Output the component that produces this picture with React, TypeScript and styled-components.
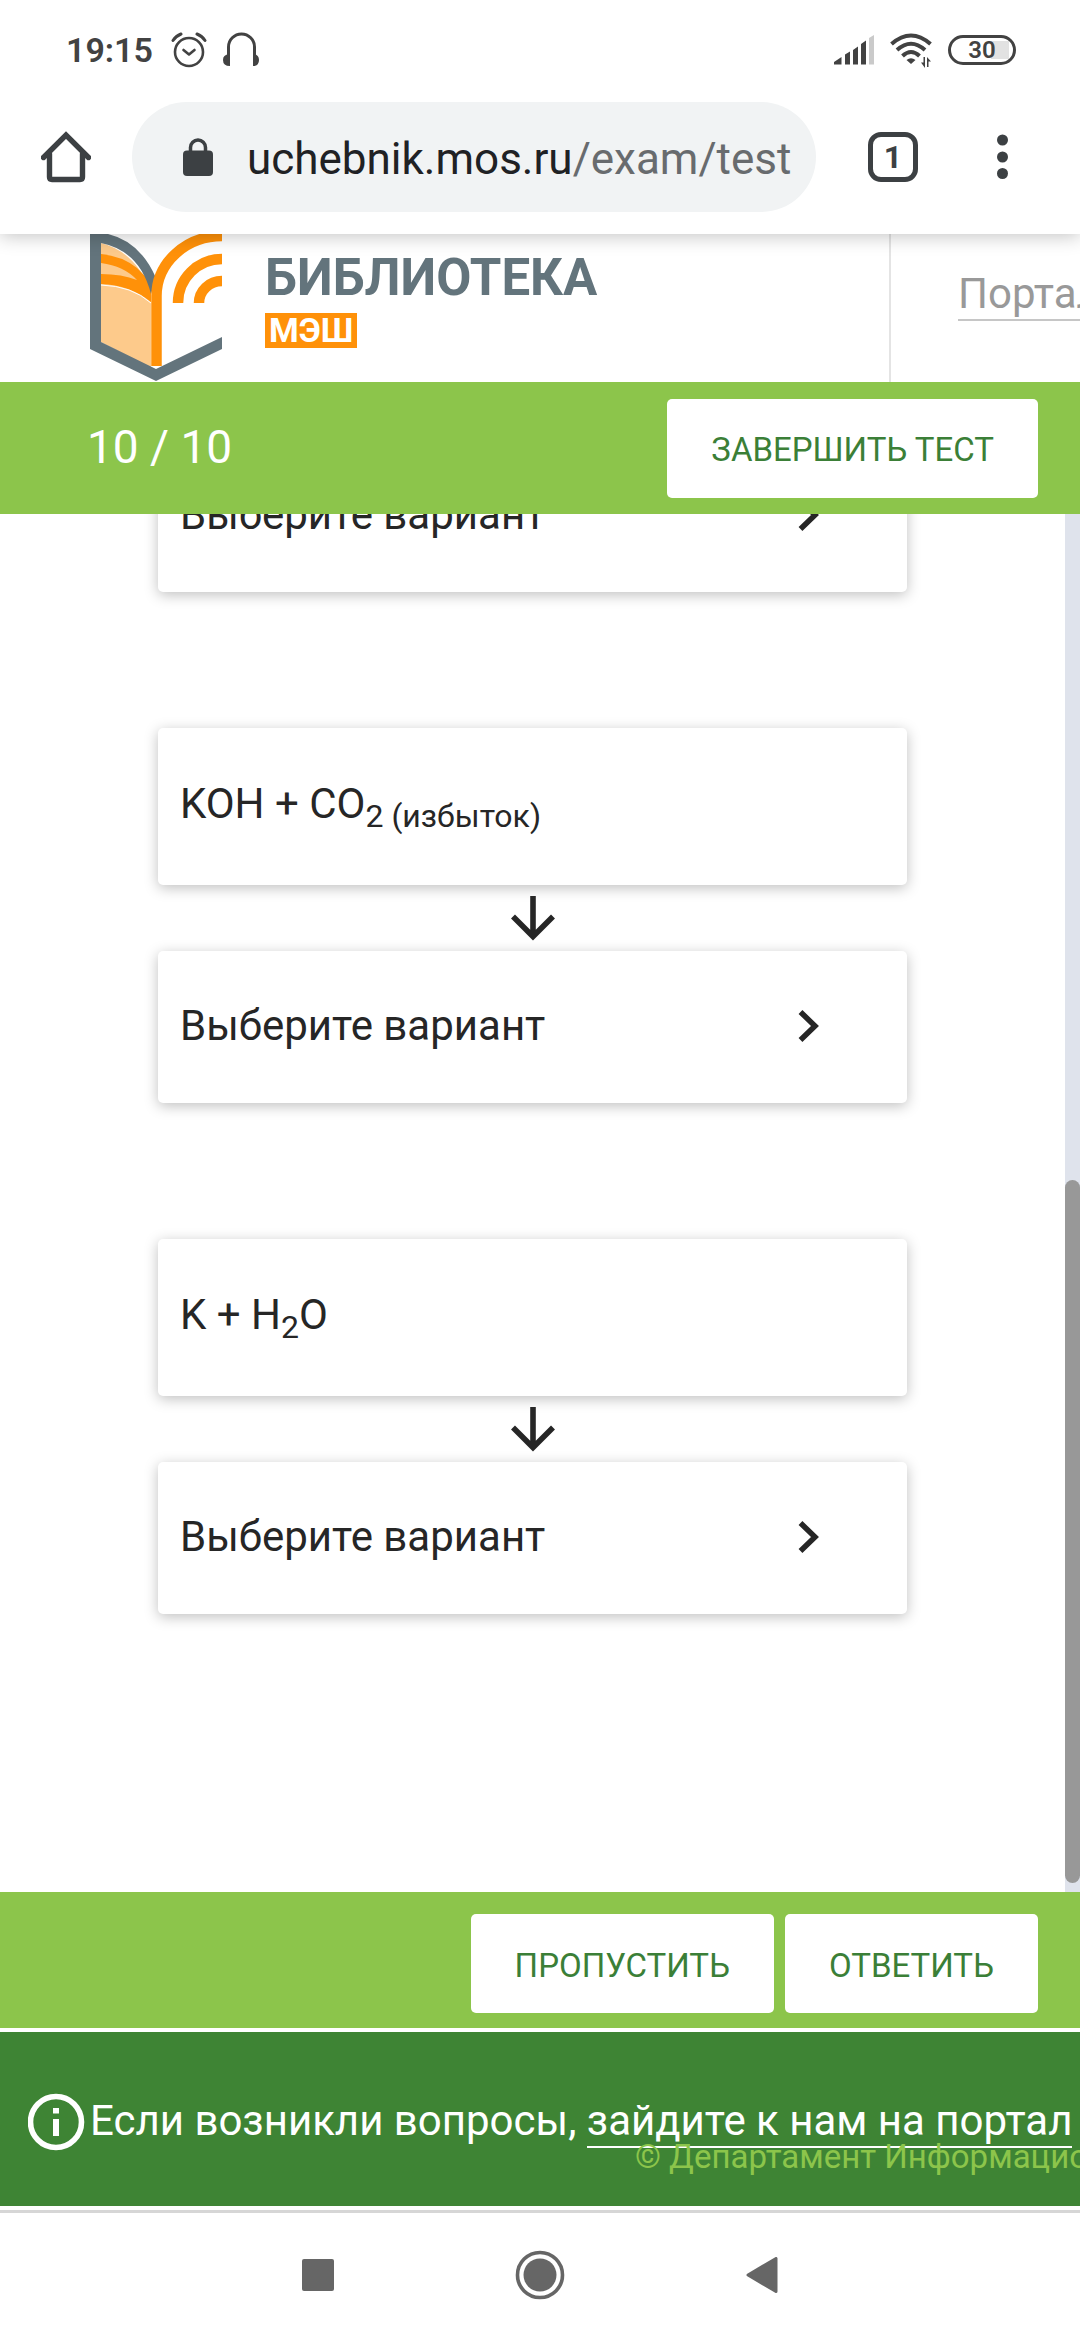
import React from "react";
import styled, { createGlobalStyle } from "styled-components";

const color = {
  lime: "#8cc54b",
  green: "#3e8434",
  buttonText: "#3b7f37",
  ink: "#262626",
  chrome: "#3c4043",
  status: "#424242",
  slate: "#63747c",
  orange: "#ff9109",
};

const GlobalStyle = createGlobalStyle`
  *, *::before, *::after { box-sizing: border-box; }
  html, body { margin: 0; background: #fff; }
  body { font-family: Roboto, "Noto Sans", sans-serif; color: ${color.ink}; }
  button { font: inherit; color: inherit; border: 0; padding: 0; background: none; cursor: pointer; }
  svg { display: block; flex: none; }
`;

const Screen = styled.div`
  display: flex;
  flex-direction: column;
  height: 100vh;
  overflow: hidden;
`;

/* Phone status bar */

const StatusBar = styled.header`
  display: flex;
  position: relative;
  z-index: 2;
  flex: none;
  align-items: center;
  justify-content: space-between;
  height: 100px;
  padding: 0 64px 0 66px;
  background: #fff;
  color: ${color.status};
`;

const StatusGroup = styled.div`
  display: flex;
  align-items: center;
  gap: 16px;
`;

const Clock = styled.time`
  padding-right: 2px;
  font-size: 34px;
  line-height: 40px;
  font-weight: 600;
`;

const Battery = styled.span`
  display: flex;
  align-items: center;
  justify-content: center;
  width: 68px;
  height: 30px;
  border: 3px solid currentColor;
  border-radius: 15px;
  background: linear-gradient(#e2e2e2, #e2e2e2) 40px center / 18px 18px no-repeat;
  font-size: 24px;
  line-height: 24px;
  font-weight: 600;
`;

/* Browser toolbar */

const BrowserBar = styled.nav`
  display: flex;
  position: relative;
  z-index: 1;
  flex: none;
  align-items: center;
  height: 134px;
  padding: 2px 72px 22px 41px;
  background: #fff;
  box-shadow: 0 2px 18px rgba(0, 0, 0, 0.24);
  color: ${color.chrome};
`;

const AddressBar = styled.button`
  display: flex;
  flex: 1;
  align-items: center;
  min-width: 0;
  height: 110px;
  margin: 0 52px 0 41px;
  padding: 0 24px 0 51px;
  gap: 34px;
  border-radius: 55px;
  background: #f1f3f4;
  white-space: nowrap;
  overflow: hidden;
`;

const Url = styled.span`
  padding-top: 4px;
  font-size: 44px;
  line-height: 52px;
  color: #202124;
`;

const UrlPath = styled.span`
  color: #686b6e;
`;

const TabsButton = styled.button`
  width: 50px;
  height: 50px;
  margin-right: 79px;
  border: 5px solid ${color.chrome};
  border-radius: 13px;
  font-size: 32px;
  line-height: 40px;
  font-weight: 700;
`;

/* Library header */

const SiteHeader = styled.header`
  display: flex;
  flex: none;
  height: 148px;
  overflow: hidden;
`;

const Brand = styled.a`
  display: flex;
  flex: 1;
  gap: 43px;
  padding-left: 90px;
  text-decoration: none;
`;

const BrandText = styled.span`
  display: flex;
  flex-direction: column;
  align-items: flex-start;
  gap: 5px;
  padding-top: 14px;
`;

const BrandName = styled.span`
  font-size: 51px;
  line-height: 60px;
  font-weight: 700;
  color: ${color.slate};
`;

const BrandTag = styled.span`
  padding: 0 4px;
  background: ${color.orange};
  color: #fff;
  font-size: 34px;
  line-height: 35px;
  font-weight: 700;
`;

const PortalNav = styled.nav`
  width: 191px;
  padding: 35px 0 0 67px;
  border-left: 2px solid #e4e4e4;
  overflow: hidden;
`;

const PortalLink = styled.a`
  display: inline-block;
  border-bottom: 2px solid #c6c6c6;
  font-size: 42px;
  line-height: 50px;
  color: #999;
  text-decoration: none;
  white-space: nowrap;
`;

/* Test bars */

const TopBar = styled.div`
  display: flex;
  flex: none;
  align-items: center;
  justify-content: space-between;
  height: 132px;
  padding: 0 42px 0 87px;
  background: ${color.lime};
`;

const Progress = styled.span`
  padding-bottom: 2px;
  font-size: 46px;
  line-height: 54px;
  color: #fff;
`;

const BottomBar = styled.div`
  display: flex;
  flex: none;
  justify-content: flex-end;
  gap: 11px;
  height: 136px;
  padding: 22px 42px 0;
  background: ${color.lime};
`;

const ActionButton = styled.button`
  height: 99px;
  padding: 4px 44px 0;
  border-radius: 5px;
  background: #fff;
  color: ${color.buttonText};
  font-size: 33px;
  line-height: 40px;
`;

/* Questions */

const ScrollArea = styled.main`
  display: flex;
  flex: 1;
  min-height: 0;
  overflow: hidden;
`;

const Questions = styled.div`
  display: flex;
  flex: 1;
  flex-direction: column;
  justify-content: flex-end;
  gap: 136px;
  padding: 0 158px 278px;
`;

const Pair = styled.section`
  display: flex;
  flex-direction: column;
`;

const Card = styled.div`
  display: flex;
  align-items: center;
  padding: 0 86px 0 22px;
  border-radius: 5px;
  background: #fff;
  box-shadow: 0 3px 14px rgba(0, 0, 0, 0.25);
  font-size: 42px;
  line-height: 50px;
`;

const Formula = styled(Card)`
  height: 157px;
  padding-bottom: 6px;

  sub {
    font-size: 32px;
    line-height: 0;
    vertical-align: -9px;
  }
`;

const Choice = styled(Card).attrs({ as: "button" })`
  && {
    justify-content: space-between;
    height: 152px;
    padding: 0 86px 2px 22px;
    background: #fff;
    font-size: 42px;
  }
`;

const ArrowSlot = styled.div`
  display: flex;
  align-items: center;
  justify-content: center;
  height: 66px;
`;

const ScrollTrack = styled.div`
  display: flex;
  flex-direction: column;
  justify-content: flex-end;
  width: 15px;
  padding-bottom: 9px;
  background: #dfe3ec;
`;

const ScrollThumb = styled.div`
  height: calc(51% + 5px);
  border-radius: 8px;
  background: #989898;
`;

/* Footer */

const Footer = styled.footer`
  display: flex;
  position: relative;
  flex: none;
  align-items: center;
  gap: 5px;
  height: 182px;
  padding: 6px 0 0 28px;
  border: solid #fff;
  border-width: 4px 0;
  background: ${color.green};
  color: #fff;
  font-size: 42px;
  line-height: 50px;
  white-space: nowrap;
  overflow: hidden;
`;

const SupportLink = styled.a`
  display: inline-block;
  border-bottom: 2px solid #fff;
  color: #fff;
  text-decoration: none;
`;

const Copyright = styled.small`
  position: absolute;
  left: 635px;
  bottom: 29px;
  font-size: 33px;
  line-height: 40px;
  color: ${color.lime};
`;

/* Phone navigation */

const SystemNav = styled.nav`
  display: flex;
  flex: none;
  align-items: center;
  justify-content: center;
  gap: 172px;
  height: 130px;
  padding-bottom: 3px;
  border-top: 3px solid #d6d6d6;
  color: #666;
`;

const NavButton = styled.button`
  display: flex;
  justify-content: center;
  width: 50px;
`;

const AlarmIcon = () => (
  <svg width="36" height="36" viewBox="0 0 36 36" fill="none" stroke="currentColor" strokeLinecap="round" strokeLinejoin="round">
    <circle cx="18" cy="20" r="14" strokeWidth="2.6" />
    <path d="M12.5 18 18 22.5 23.500 18" strokeWidth="2.6" />
    <path d="M2 8.500Q5 4 10 2M34 8.500Q31 4 26 2" strokeWidth="3" />
  </svg>
);

const HeadphonesIcon = () => (
  <svg width="36" height="36" viewBox="0 0 36 36">
    <path d="M5.500 32V15a12.500 12.500 0 0 1 26 0v17" fill="none" stroke="currentColor" strokeWidth="3" />
    <path d="M7 22.500V34Q0 34 0 28T7 22.500M30 22.500V34Q36 34 36 28T30 22.500" fill="currentColor" />
  </svg>
);

const SignalIcon = () => (
  <svg width="40" height="34" viewBox="0 0 40 34" fill="currentColor">
    <path d="M0 31.500V29L7.500 24v7.500zM11 31.500V21.500L16 18.500V31.500zM19 31.500V17L24 13.500V31.500zM27 31.500V11L32 7.500V31.500z" />
    <path d="M35 31.500V5L40 2v29.500z" fill="#cacaca" />
  </svg>
);

const WifiIcon = () => (
  <svg width="42" height="36" viewBox="0 0 42 36">
    <g fill="none" stroke="currentColor" strokeWidth="4">
      <path d="M1.500 12Q21-5 40.500 12" />
      <path d="M7 18Q21 5.500 35 18" />
      <path d="M12.500 24Q21 16 29.500 24" />
    </g>
    <path d="M16.500 28Q21 24.500 25.500 28L21 32z" fill="currentColor" />
    <path d="M31 30.500h2.500v-5.500h1.500v11zM41 29.500h-2.500v5.500H37V25z" fill="currentColor" />
  </svg>
);

const HomeIcon = () => (
  <svg width="50" height="52" viewBox="0 0 50 52" fill="none" stroke="currentColor" strokeWidth="5.400" strokeLinecap="round">
    <path d="M2.500 26.500 25 4 47.500 26.500" />
    <path d="M8.500 23V46q0 2.500 2.500 2.500h28q2.500 0 2.500-2.500V23" />
  </svg>
);

const LockIcon = () => (
  <svg width="30" height="38" viewBox="0 0 30 38">
    <rect y="12.500" width="30" height="25.500" rx="4" fill="currentColor" />
    <path d="M7.500 14V9.500a7.500 7.500 0 0 1 15 0V14" fill="none" stroke="currentColor" strokeWidth="3.500" />
  </svg>
);

const MoreIcon = () => (
  <svg width="11" height="46" viewBox="0 0 11 46" fill="currentColor">
    <circle cx="5.500" cy="6" r="5.500" />
    <circle cx="5.500" cy="23" r="5.500" />
    <circle cx="5.500" cy="39.500" r="5.500" />
  </svg>
);

const LibraryLogo = () => (
  <svg width="132" height="148" viewBox="0 0 132 148">
    <path d="M11 9Q46 18 61 58V134L11 108z" fill="#fdca8b" />
    <path d="M11 20Q32 22 47 34L61 48V68Q40 51 11 50V40Q32 40 47 46Q34 32 11 29z" fill={color.orange} />
    <path d="M11 51Q42 52 61 69" fill="none" stroke="#fff" strokeWidth="1" />
    <path
      d="M0-2Q46-2 66 44L61 60Q50 17 11 9V108L66 135L132 103V115L66 147L0 115z"
      fill={color.slate}
    />
    <g fill="none" stroke={color.orange} strokeWidth="10.500">
      <path d="M66.500 132V62A65.500 60 0 0 1 132 2" />
      <path d="M88 69A44 44 0 0 1 132 25" />
      <path d="M109 69A23 22 0 0 1 132 47" />
    </g>
  </svg>
);

const ArrowDownIcon = () => (
  <svg width="46" height="46" viewBox="0 0 46 46" fill="none" stroke={color.ink} strokeWidth="5.600">
    <path d="M23 1V41M3 21.500 23 41.500 43 21.500" />
  </svg>
);

const ChevronIcon = () => (
  <svg width="24" height="36" viewBox="0 0 24 36" fill="none" stroke={color.ink} strokeWidth="5.500">
    <path d="M3.500 4 18 18 3.500 32" />
  </svg>
);

const InfoIcon = () => (
  <svg width="57" height="58" viewBox="0 0 57 58">
    <circle cx="28" cy="29" r="25.500" fill="none" stroke="currentColor" strokeWidth="5.600" />
    <path d="M25 15h6v5.500h-6zM25 26h6v17h-6z" fill="currentColor" />
  </svg>
);

const VariantButton = () => (
  <Choice aria-haspopup="listbox">
    <span>Выберите вариант</span>
    <ChevronIcon />
  </Choice>
);

const Question = ({ children }: { children: React.ReactNode }) => (
  <Pair>
    <Formula>
      <span>{children}</span>
    </Formula>
    <ArrowSlot>
      <ArrowDownIcon />
    </ArrowSlot>
    <VariantButton />
  </Pair>
);

export default function App() {
  return (
    <Screen>
      <GlobalStyle />

      <StatusBar>
        <StatusGroup>
          <Clock>19:15</Clock>
          <AlarmIcon />
          <HeadphonesIcon />
        </StatusGroup>
        <StatusGroup>
          <SignalIcon />
          <WifiIcon />
          <Battery>30</Battery>
        </StatusGroup>
      </StatusBar>

      <BrowserBar>
        <button aria-label="Домой">
          <HomeIcon />
        </button>
        <AddressBar>
          <LockIcon />
          <Url>
            uchebnik.mos.ru<UrlPath>/exam/test</UrlPath>
          </Url>
        </AddressBar>
        <TabsButton>1</TabsButton>
        <button aria-label="Меню">
          <MoreIcon />
        </button>
      </BrowserBar>

      <SiteHeader>
        <Brand href="#library">
          <LibraryLogo />
          <BrandText>
            <BrandName>БИБЛИОТЕКА</BrandName>
            <BrandTag>МЭШ</BrandTag>
          </BrandText>
        </Brand>
        <PortalNav>
          <PortalLink href="#portal">Портал</PortalLink>
        </PortalNav>
      </SiteHeader>

      <TopBar>
        <Progress>10 / 10</Progress>
        <ActionButton>ЗАВЕРШИТЬ ТЕСТ</ActionButton>
      </TopBar>

      <ScrollArea>
        <Questions>
          <Pair>
            <VariantButton />
          </Pair>
          <Question>
            KOH + CO<sub>2 (избыток)</sub>
          </Question>
          <Question>
            K + H<sub>2</sub>O
          </Question>
        </Questions>
        <ScrollTrack>
          <ScrollThumb />
        </ScrollTrack>
      </ScrollArea>

      <BottomBar>
        <ActionButton>ПРОПУСТИТЬ</ActionButton>
        <ActionButton>ОТВЕТИТЬ</ActionButton>
      </BottomBar>

      <Footer>
        <InfoIcon />
        <span>
          Если возникли вопросы, <SupportLink href="#support">зайдите к нам на портал</SupportLink>
        </span>
        <Copyright>© Департамент Информационных технологий</Copyright>
      </Footer>

      <SystemNav>
        <NavButton aria-label="Недавние приложения">
          <svg width="32" height="32" viewBox="0 0 32 32">
            <rect width="32" height="32" rx="2" fill="currentColor" />
          </svg>
        </NavButton>
        <NavButton aria-label="Главный экран">
          <svg width="50" height="50" viewBox="0 0 50 50">
            <circle cx="25" cy="25" r="22.500" fill="none" stroke="currentColor" strokeWidth="3.600" />
            <circle cx="25" cy="25" r="16.500" fill="currentColor" />
          </svg>
        </NavButton>
        <NavButton aria-label="Назад">
          <svg width="32" height="36" viewBox="0 0 32 36">
            <path d="M30 1.500V34.500L2 18z" fill="currentColor" stroke="currentColor" strokeWidth="3" strokeLinejoin="round" />
          </svg>
        </NavButton>
      </SystemNav>
    </Screen>
  );
}
